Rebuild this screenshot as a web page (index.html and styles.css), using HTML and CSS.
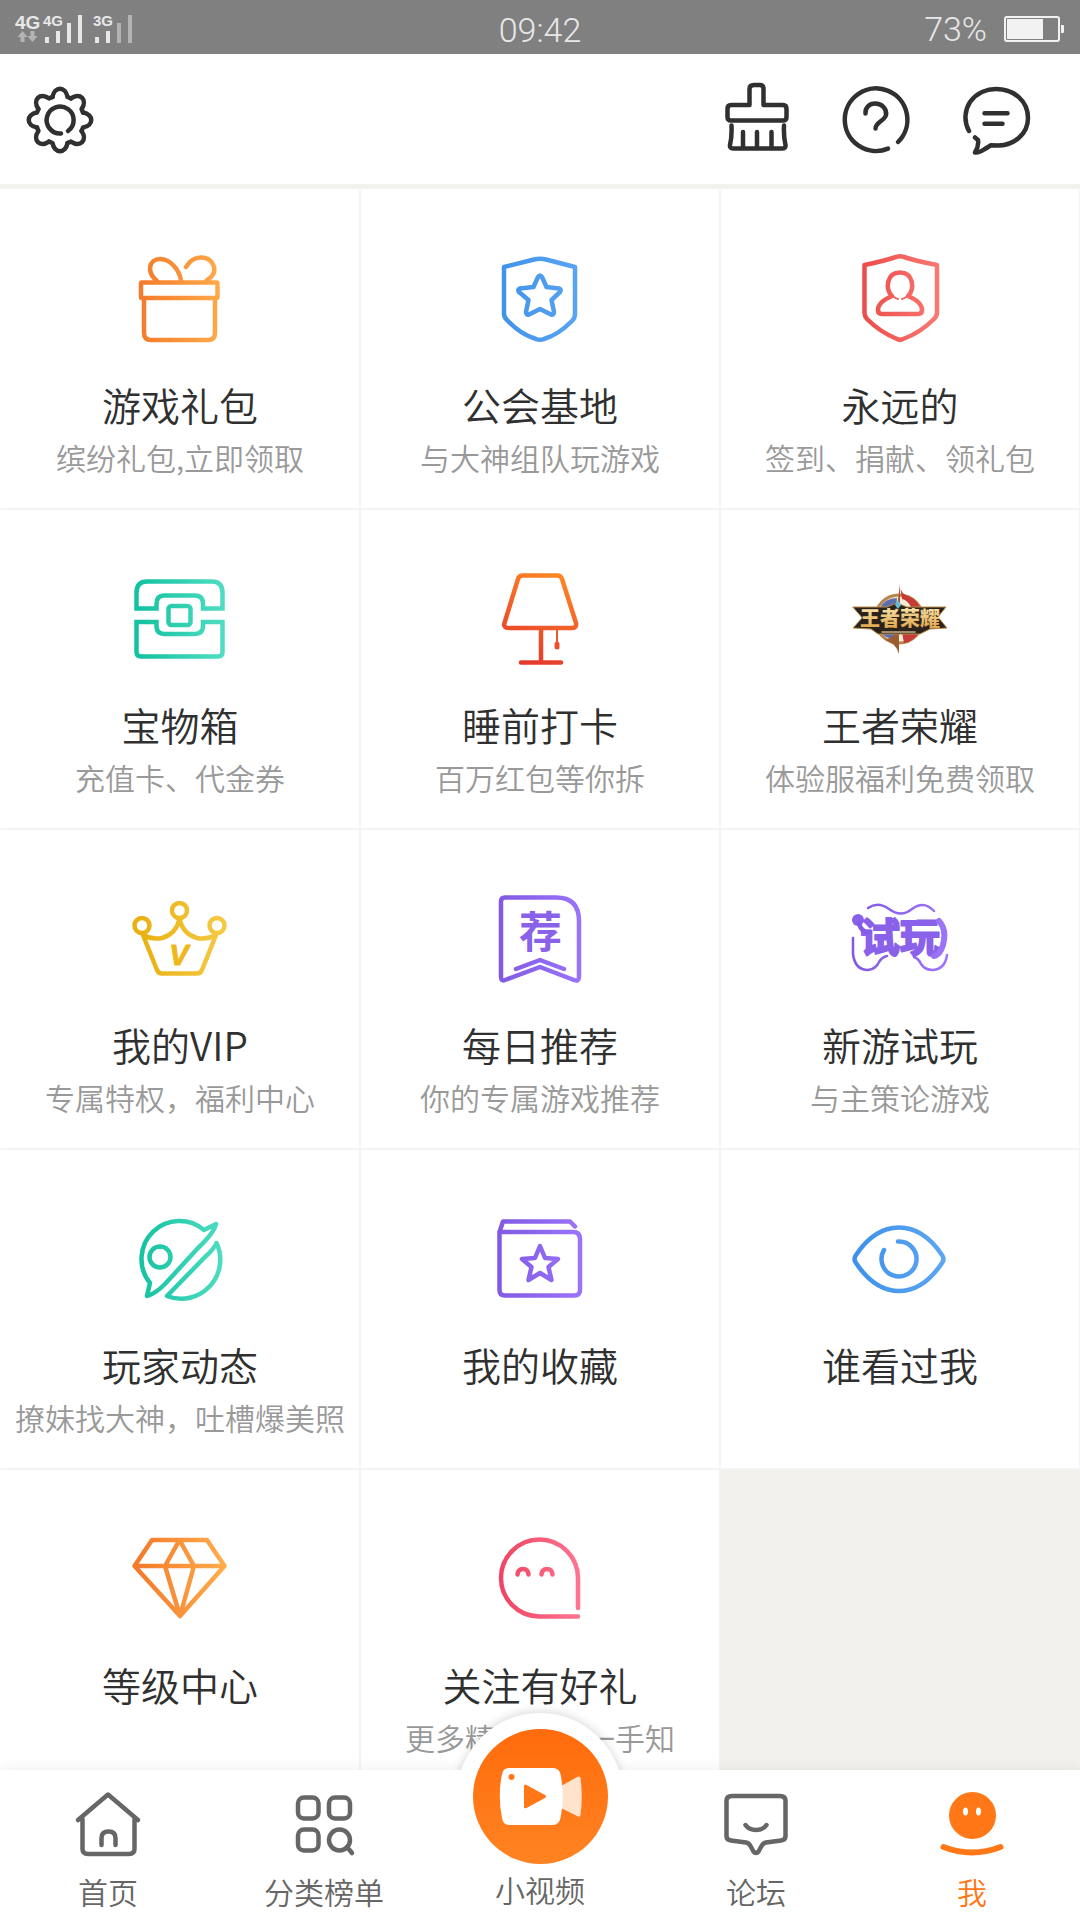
FILE: index.html
```html
<!DOCTYPE html>
<html lang="zh-CN">
<head>
    <meta charset="UTF-8">
    <meta name="viewport" content="width=device-width, initial-scale=1.0">
    <link rel="stylesheet" href="styles.css">
    <title>我</title>
</head>
<body>
    <!-- Shared gradients -->
    <svg class="defs" width="0" height="0" aria-hidden="true">
        <defs>
            <linearGradient id="orange" gradientUnits="userSpaceOnUse" x1="8" y1="50" x2="92" y2="50"><stop offset="0" stop-color="#f47a2b"/><stop offset="1" stop-color="#ffab4a"/></linearGradient>
            <linearGradient id="blue" gradientUnits="userSpaceOnUse" x1="8" y1="50" x2="92" y2="50"><stop offset="0" stop-color="#3f92ea"/><stop offset="1" stop-color="#5ba5f3"/></linearGradient>
            <linearGradient id="red" gradientUnits="userSpaceOnUse" x1="8" y1="50" x2="92" y2="50"><stop offset="0" stop-color="#ea4a47"/><stop offset="1" stop-color="#fb7a74"/></linearGradient>
            <linearGradient id="green" gradientUnits="userSpaceOnUse" x1="8" y1="50" x2="92" y2="50"><stop offset="0" stop-color="#12c2a0"/><stop offset="1" stop-color="#4edcc2"/></linearGradient>
            <linearGradient id="lamp" gradientUnits="userSpaceOnUse" x1="80" y1="5" x2="40" y2="95"><stop offset="0" stop-color="#ff8a22"/><stop offset="1" stop-color="#e5392f"/></linearGradient>
            <linearGradient id="yellow" gradientUnits="userSpaceOnUse" x1="8" y1="50" x2="92" y2="50"><stop offset="0" stop-color="#e8b010"/><stop offset="1" stop-color="#f5c944"/></linearGradient>
            <linearGradient id="purple" gradientUnits="userSpaceOnUse" x1="8" y1="50" x2="92" y2="50"><stop offset="0" stop-color="#8159e4"/><stop offset="1" stop-color="#9b74fa"/></linearGradient>
            <linearGradient id="pink" gradientUnits="userSpaceOnUse" x1="8" y1="50" x2="92" y2="50"><stop offset="0" stop-color="#ee4362"/><stop offset="1" stop-color="#ff7690"/></linearGradient>
            <linearGradient id="gold" x1="0" y1="0" x2="0" y2="1"><stop offset="0" stop-color="#fff0bd"/><stop offset="1" stop-color="#d99a3a"/></linearGradient>
        </defs>
    </svg>

    <div class="app">
        <div class="status-bar">
            <svg class="signal" viewBox="0 0 140 54">
                <g fill="#e8e8e8">
                    <text x="15" y="27" font-size="19" font-weight="bold">4G</text>
                    <text x="43" y="24" font-size="15" font-weight="bold">4G</text>
                    <text x="93" y="24" font-size="15" font-weight="bold">3G</text>
                    <path d="M45 35h4v6h-4zM56 29h4v12h-4zM67 21h4v20h-4zM78 13h4v28h-4zM95 35h4v6h-4zM106 29h4v12h-4z"/>
                </g>
                <path fill="#b3b3b3" d="M117 21h4v20h-4zM128 13h4v28h-4zM22.5 29l5 6h-3v5h-4v-5h-3zM32.5 40l-5-6h3v-5h4v5h3z"/>
            </svg>
            <span class="time">09:42</span>
            <div class="power">
                <span>73%</span>
                <svg class="battery" viewBox="0 0 60 26">
                    <rect x="1" y="1" width="54" height="24" rx="2" fill="none" stroke="#f2f2f2" stroke-width="2"/>
                    <path fill="#f2f2f2" d="M3 3h36v20H3zM57 9h2q1 0 1 1v6q0 1-1 1h-2z"/>
                </svg>
            </div>
        </div>

        <header class="toolbar">
            <button class="tool settings" aria-label="设置">
                <svg viewBox="0 0 80 80">
                    <defs><path id="tooth" d="M-7.5-23C-5.5-34 5.5-34 7.5-23L11-21.6"/></defs>
                    <g transform="translate(40 40)">
                        <use href="#tooth"/>
                        <use href="#tooth" transform="rotate(45)"/>
                        <use href="#tooth" transform="rotate(90)"/>
                        <use href="#tooth" transform="rotate(135)"/>
                        <use href="#tooth" transform="rotate(180)"/>
                        <use href="#tooth" transform="rotate(225)"/>
                        <use href="#tooth" transform="rotate(270)"/>
                        <use href="#tooth" transform="rotate(315)"/>
                    </g>
                    <path d="M48 51A13.5 13.5 0 1 0 41 53.5"/>
                </svg>
            </button>
            <button class="tool" aria-label="清理">
                <svg viewBox="0 0 80 80">
                    <path d="M32.5 25V9Q32.5 5 37 5H43Q46.5 5 46.5 9V25H66Q69.5 25 69.5 29V37Q69.5 40.5 66 40.5H14Q10.5 40.5 10.5 37V29Q10.5 25 14 25Z"/>
                    <path d="M14.5 45.5Q15 57 13 65Q12.5 68.5 16 68.5H65Q69 68.5 68.5 65Q66.5 57 67 45.5M26 52V68M40 52V68M54.5 52V68"/>
                </svg>
            </button>
            <button class="tool" aria-label="帮助">
                <svg viewBox="0 0 80 80">
                    <path d="M61 62A31.3 31.3 0 1 0 51 68.6"/>
                    <path d="M28.5 33.5C28 27 33 23.5 38 23.5C45 23.5 50 29 49 35C48 40.5 38.5 42 38.5 48.5"/>
                </svg>
            </button>
            <button class="tool" aria-label="消息">
                <svg viewBox="0 0 80 80">
                    <path d="M12 51C6 40 8.5 29 13 22C20 12 31 9 39 9C57 9 71 21 71 38C71 54 57 65.5 41 65.5L34 65.3L27 69.5Q22 73 18 72.5Q22 66 21 60L18 57.5M27.5 33.3H50.5M27.5 43.7H45.5"/>
                </svg>
            </button>
        </header>

        <main class="content">
            <div class="grid">
                <a class="cell" href="#">
                    <svg class="icon" viewBox="0 0 100 100" stroke="url(#orange)">
                        <rect x="11" y="33.5" width="76.5" height="15.5" rx="1"/>
                        <path d="M14 50V84Q14 91 21 91H78Q85 91 85 84V50M27 32C16 23 19 10 30 10C41 10 50 22 51 32M56 18C60 11 66 8.5 71 8.5C83 8.5 88 21 81 28L76 32"/>
                    </svg>
                    <h2>游戏礼包</h2>
                    <p>缤纷礼包,立即领取</p>
                </a>
                <a class="cell" href="#">
                    <svg class="icon" viewBox="0 0 100 100" stroke="url(#blue)">
                        <path d="M14 18L44 10.5Q50 9 56 10.5L85 18V65Q85 69 82 72Q68 86 54 90Q50 91.5 46 90Q30 85 17 71Q14.5 69 14 65Z"/>
                        <path d="M48 28Q50 25 52 28L56.5 38L69 39.5Q72 40.5 70 43L61.5 51L64 63Q64 66.5 61 65.5L50 60L39 65.5Q36 66.5 36 63L38.5 51L29 43Q27 40.5 30 39.5L43.5 38Z"/>
                    </svg>
                    <h2>公会基地</h2>
                    <p>与大神组队玩游戏</p>
                </a>
                <a class="cell" href="#">
                    <svg class="icon" viewBox="0 0 100 100" stroke="url(#red)">
                        <path d="M14.5 16Q34 12 46 8Q50 6.5 54 8Q66 12 87 16V64Q87 67 84 70Q70 84 53 90L50.5 91L47 90Q30 83 17 70Q14.5 67 14.5 64Z"/>
                        <path d="M42 47C35 40 36.5 23.5 50 23.5C63.5 23.5 65 40 58 47Q72 53 72 61Q72 65 68 65H32Q28 65 28 61Q28 53 42 47Z"/>
                        <path stroke-width="2" d="M44 48Q46 49.5 48 50M56 48Q54 49.5 52 50"/>
                    </svg>
                    <h2>永远的</h2>
                    <p>签到、捐献、领礼包</p>
                </a>

                <a class="cell" href="#">
                    <svg class="icon" viewBox="0 0 100 100" stroke="url(#green)">
                        <path class="sharp" d="M6.5 39.5V24Q6.5 12.5 17 12.5H82Q92.5 12.5 92.5 24V39.5H73V35Q73 26.5 65 26.5H34Q26.5 26.5 26.5 35V39.5Z"/>
                        <path class="sharp" d="M6.5 53H26.5V57Q26.5 65 35 65H64Q73 65 73 57V53H92.5V83Q92.5 87.5 88 87.5H11Q6.5 87.5 6.5 83Z"/>
                        <rect x="38.5" y="37" width="22" height="19" rx="3"/>
                    </svg>
                    <h2>宝物箱</h2>
                    <p>充值卡、代金券</p>
                </a>
                <a class="cell" href="#">
                    <svg class="icon" viewBox="0 0 100 100" stroke="url(#lamp)">
                        <path d="M33 6.5H67Q71 6.5 72 10L86 54Q87 59 82 59H19Q13 59 14.5 54L28 10Q29 6.5 33 6.5ZM51 59V93.5M31 93.5H71"/>
                        <path stroke-width="2" d="M67 60V76"/>
                        <path stroke-width="5" d="M67 75V78"/>
                    </svg>
                    <h2>睡前打卡</h2>
                    <p>百万红包等你拆</p>
                </a>
                <a class="cell" href="#">
                    <svg class="icon" viewBox="0 6 100 100">
                        <circle cx="49" cy="56" r="24" fill="#f4ead9" stroke="#b88450" stroke-width="3"/>
                        <path fill="#5e6fae" stroke="none" d="M47 35Q35 35 30 45H46ZM30 68Q35 76 46 77V69Z"/>
                        <path fill="#c73a35" stroke="none" d="M50 22Q50 31 60 34Q68 37 70 46H62Q58 37 52 36ZM52 69H69Q65 78 54 80Z"/>
                        <path fill="#9c5b31" stroke="none" d="M49 68V91Q46 80 35 77L42 74ZM50 21V44H47Z"/>
                        <path fill="#2b231b" stroke="#b98c48" stroke-width="1" d="M3 44H37L47 40L57 44H96L88 54L97 65L80 66L70 71H28L21 66L3 65L12 55Z"/>
                        <path fill="#65bdd7" stroke="none" d="M48 37L51 42L48 46L45 42Z"/>
                        <text x="50" y="63" text-anchor="middle" font-size="20" font-weight="900" fill="url(#gold)" stroke="none">王者荣耀</text>
                        <path stroke="#c9b58c" stroke-width="1.5" stroke-dasharray="3 1" d="M32 69H65"/>
                    </svg>
                    <h2>王者荣耀</h2>
                    <p>体验服福利免费领取</p>
                </a>

                <a class="cell" href="#">
                    <svg class="icon" viewBox="0 0 100 100" stroke="url(#yellow)">
                        <circle cx="49.5" cy="21.5" r="7.5"/>
                        <circle cx="12" cy="36.5" r="7.5"/>
                        <circle cx="87" cy="36.5" r="7.5"/>
                        <path d="M13 46L27 81Q28.5 84.5 32 84.5H67Q70.5 84.5 72 81L86 46Q77 51 67 49Q53 45 49.5 30Q46 45 32 49Q22 51 13 46Z"/>
                        <text class="vip" x="49" y="76" text-anchor="middle" font-size="29" fill="#eeb71c" stroke="#eeb71c" stroke-width="1">V</text>
                    </svg>
                    <h2>我的VIP</h2>
                    <p>专属特权，福利中心</p>
                </a>
                <a class="cell" href="#">
                    <svg class="icon" viewBox="0 0 100 100" stroke="url(#purple)">
                        <path d="M15 8.5H66Q89 8.5 89 32V88Q89 93 84 91L50 78L15 91Q11 92.5 11 88V12.5Q11 8.5 15 8.5ZM26 80L50 71L74 80"/>
                        <text x="50.5" y="59" text-anchor="middle" font-size="43" font-weight="bold" fill="#8a62ea" stroke="none">荐</text>
                    </svg>
                    <h2>每日推荐</h2>
                    <p>你的专属游戏推荐</p>
                </a>
                <a class="cell" href="#">
                    <svg class="icon" viewBox="0 0 100 100" stroke="url(#purple)">
                        <path stroke-width="2.5" d="M18 19Q28 12 39 20Q51 29 62 20Q74 11 84 22M3 49V65Q5 81 18 81Q26 80 29 73Q32 68 37 67M64 68Q69 70 71 75Q75 81 83 81Q95 80 97 66"/>
                        <text x="50" y="63" text-anchor="middle" font-size="40" font-weight="bold" fill="#8a62ea" stroke="#8a62ea" stroke-width="2">试玩</text>
                        <circle cx="8" cy="31" r="6" fill="#8a62ea" stroke="none"/>
                        <path d="M9 35Q12 44 20 43"/>
                        <path stroke-width="6" d="M89 32Q97 40 93 56Q90 66 84 67"/>
                    </svg>
                    <h2>新游试玩</h2>
                    <p>与主策论游戏</p>
                </a>

                <a class="cell" href="#">
                    <svg class="icon" viewBox="0 0 100 100" stroke="url(#green)">
                        <path d="M86 15L74 21A38 38 0 0 0 20 74L17 87Q25 85 35 75L68 39Q84 24 86 15Z"/>
                        <path d="M37 87L75 48Q84 40 86.5 34A39 39 0 0 1 37 87Z"/>
                        <circle cx="30" cy="48" r="10.5"/>
                    </svg>
                    <h2>玩家动态</h2>
                    <p>撩妹找大神，吐槽爆美照</p>
                </a>
                <a class="cell" href="#">
                    <svg class="icon" viewBox="0 0 100 100" stroke="url(#purple)">
                        <path d="M9.5 23L13 12.5H80L85 17.5M9.5 23H83Q90 23 90 30V81Q90 86.5 84 86.5H15Q9.5 86.5 9.5 81Z"/>
                        <path d="M50 37L55 49L68 50L58.5 58L61.5 71L50 64L38.5 71L41.5 58L32 50L45 49Z"/>
                    </svg>
                    <h2>我的收藏</h2>
                </a>
                <a class="cell" href="#">
                    <svg class="icon" viewBox="0 0 100 100" stroke="url(#blue)">
                        <path d="M6 46C18 28 33 18.5 49 18.5C65 18.5 80 28 92 46Q95 50 92 54C80 72 65 82 49 82C33 82 18 72 6 54Q3 50 6 46Z"/>
                        <path d="M48 32.5A17.5 17.5 0 1 1 34 41"/>
                    </svg>
                    <h2>谁看过我</h2>
                </a>

                <a class="cell" href="#">
                    <svg class="icon" viewBox="0 0 100 100" stroke="url(#orange)">
                        <path d="M22 11H77L94.5 37L50 87L4.5 37ZM4.5 37H94.5M49.5 11L35 37L50 87L64 37Z"/>
                    </svg>
                    <h2>等级中心</h2>
                </a>
                <a class="cell" href="#">
                    <svg class="icon" viewBox="0 0 100 100" stroke="url(#pink)">
                        <path d="M88 79V49A38.5 38.5 0 1 0 49 87.5H88"/>
                        <path d="M27.5 45.5Q28 40 33 40Q38 40 38.5 45.5M51.5 45.5Q52 40 57 40Q62 40 62.5 45.5"/>
                    </svg>
                    <h2>关注有好礼</h2>
                    <p>更多精彩，第一手知</p>
                </a>
            </div>
        </main>

        <nav class="tab-bar">
            <a class="tab" href="#">
                <svg class="tab-icon" viewBox="0 0 72 72">
                    <path d="M6 32L36 6.5L66 32M10.5 31V61Q10.5 66 16 66H57Q62.5 66 62.5 61V31M29.5 57V50Q29.5 43.5 36.5 43.5Q43.5 43.5 43.5 50V57"/>
                </svg>
                <span>首页</span>
            </a>
            <a class="tab" href="#">
                <svg class="tab-icon" viewBox="0 0 72 72">
                    <rect x="10" y="9.5" width="20.5" height="21" rx="6"/>
                    <rect x="41" y="9.5" width="21" height="21" rx="6"/>
                    <rect x="10" y="41.5" width="20.5" height="21" rx="6"/>
                    <circle cx="51.5" cy="52" r="10.5"/>
                    <path d="M59 59L64 65"/>
                </svg>
                <span>分类榜单</span>
            </a>
            <a class="tab video" href="#">
                <span class="video-button">
                    <svg viewBox="0 0 135 135">
                        <path fill="#ffe3cc" d="M88 57L105 47.5Q107 47 107.5 49Q110 68 107.5 86Q107 88.5 105 87.5L88 79Z"/>
                        <path fill="#fff" d="M36 39H80Q86 39 87.5 45Q92 67 87.5 89Q86 96 80 96H36Q30 96 29 89Q24.5 67 29 45Q30 39 36 39Z"/>
                        <circle cx="38.5" cy="48" r="3" fill="#ff7716"/>
                        <path fill="#ff7716" d="M51 57Q51 54.5 53.5 56L72 66Q74 67.5 72 69L53.5 79Q51 80 51 78Z"/>
                    </svg>
                </span>
                <span>小视频</span>
            </a>
            <a class="tab" href="#">
                <svg class="tab-icon" viewBox="0 0 72 72">
                    <path d="M12 8H60Q65.5 8 65.5 13V48Q65.5 52 61 52.5L46 54.5Q43 55 41.5 58L38.5 63.5Q36 66.5 33.5 63.5L30.5 58Q29 55 26 54.5L11 52.5Q6.5 52 6.5 48V13Q6.5 8 12 8ZM25.5 37Q29 42 36 42Q43 42 46.5 37"/>
                </svg>
                <span>论坛</span>
            </a>
            <a class="tab active" href="#">
                <svg class="tab-icon" viewBox="0 0 72 72">
                    <circle cx="36.5" cy="27.5" r="23.5" fill="#ff7716" stroke="none"/>
                    <ellipse cx="29.5" cy="23.5" rx="2.5" ry="4" fill="#fff" stroke="none"/>
                    <ellipse cx="42.5" cy="23.5" rx="2.5" ry="4" fill="#fff" stroke="none"/>
                    <path d="M7.5 59Q36 70 64.5 59"/>
                </svg>
                <span>我</span>
            </a>
        </nav>
    </div>
</body>
</html>
```

FILE: styles.css
```css
* {
    box-sizing: border-box;
}

body {
    margin: 0;
    font-family: "Noto Sans CJK SC", sans-serif;
    font-weight: 350;
    background-color: #f3f1ed;
    color: #303030;
}

a {
    color: inherit;
    text-decoration: none;
}

svg {
    display: block;
}

.defs {
    position: absolute;
}

.app {
    display: flex;
    flex-direction: column;
    height: 100vh;
}

/* Status bar */
.status-bar {
    display: grid;
    grid-template-columns: 1fr auto 1fr;
    align-items: center;
    flex: none;
    height: 54px;
    padding-right: 16px;
    background-color: #808080;
    color: #e8e8e8;
    font-family: Roboto, sans-serif;
    font-size: 34px;
    font-weight: 300;
    line-height: 54px;
}

.signal {
    width: 140px;
    height: 54px;
    font-family: "Liberation Sans", sans-serif;
}

.time {
    padding-left: 16px;
    padding-top: 3px;
}

.power {
    display: flex;
    align-items: center;
    justify-content: flex-end;
    gap: 17px;
}

.battery {
    width: 60px;
    height: 26px;
}

/* Toolbar */
.toolbar {
    display: flex;
    align-items: center;
    flex: none;
    gap: 40px;
    height: 135px;
    padding: 2px 43px 0 20px;
    background-color: #fff;
    border-bottom: 5px solid #f2f2ef;
}

.tool {
    width: 80px;
    height: 80px;
    padding: 0;
    border: none;
    background: none;
    cursor: pointer;
}

.tool svg {
    fill: none;
    stroke: #303030;
    stroke-width: 4.5;
    stroke-linecap: round;
    stroke-linejoin: round;
}

.settings {
    margin-right: auto;
}

/* Feature grid */
.content {
    flex: 1;
    min-height: 0;
    overflow-y: auto;
    scrollbar-width: none;
}

.grid {
    display: grid;
    grid-template-columns: repeat(3, 1fr);
    grid-auto-rows: 320px;
    border-top: 1px solid #fff;
}

.cell {
    display: flex;
    flex-direction: column;
    align-items: center;
    padding-top: 59px;
    background-color: #fff;
    border: 1px solid #f4f4f4;
    border-width: 0 1px 2px;
    white-space: nowrap;
}

.cell:nth-child(3n + 1) {
    border-left-color: #fff;
}

.icon {
    width: 100px;
    height: 100px;
    fill: none;
    stroke-width: 4.5;
    stroke-linecap: round;
    stroke-linejoin: round;
}

.icon .sharp {
    stroke-linejoin: miter;
}

.icon .vip {
    font-family: "Liberation Sans", sans-serif;
    font-weight: bold;
    font-style: italic;
}

.cell h2 {
    margin: 29px 0 0;
    font-size: 39px;
    font-weight: 350;
    line-height: 52px;
}

.cell p {
    margin: 5px 0 0;
    color: #999;
    font-size: 30px;
    line-height: 44px;
}

/* Bottom tabs */
.tab-bar {
    position: relative;
    display: flex;
    flex: none;
    height: 150px;
    background-color: #fff;
    box-shadow: 0 0 14px rgba(0, 0, 0, 0.08);
}

.tab {
    display: flex;
    flex: 1;
    flex-direction: column;
    align-items: center;
    gap: 11px;
    padding-top: 18px;
    color: #666;
    font-size: 30px;
    line-height: 40px;
}

.tab-icon {
    width: 72px;
    height: 72px;
    fill: none;
    stroke: #666;
    stroke-width: 4.5;
    stroke-linecap: round;
    stroke-linejoin: round;
}

.active {
    color: #ff7716;
}

.active .tab-icon {
    stroke: #ff7716;
    stroke-width: 6;
}

/* Raised round button, sticks out above the tab bar */
.video {
    position: relative;
    justify-content: flex-end;
    padding: 0 0 11px;
    background-color: #fff;
}

.video::before {
    content: "";
    position: absolute;
    top: -57px;
    left: 50%;
    width: 166px;
    height: 166px;
    margin-left: -83px;
    border-radius: 50%;
    background-color: #fff;
    box-shadow: 0 -2px 10px rgba(0, 0, 0, 0.14);
    clip-path: inset(-20px -20px 109px -20px);
}

.video-button {
    position: absolute;
    top: -41px;
    left: 50%;
    width: 135px;
    height: 135px;
    margin-left: -67px;
    border-radius: 50%;
    background: linear-gradient(#ff6b0c, #ff8322);
}
```
